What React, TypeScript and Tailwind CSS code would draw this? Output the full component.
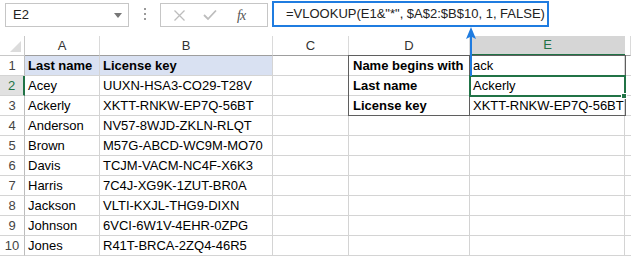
import React from 'react';

const cols = [
  { key: 'A', w: 75 },
  { key: 'B', w: 173 },
  { key: 'C', w: 76 },
  { key: 'D', w: 121 },
  { key: 'E', w: 155 },
  { key: 'F', w: 6 },
];

const people: [string, string][] = [
  ['Acey', 'UUXN-HSA3-CO29-T28V'],
  ['Ackerly', 'XKTT-RNKW-EP7Q-56BT'],
  ['Anderson', 'NV57-8WJD-ZKLN-RLQT'],
  ['Brown', 'M57G-ABCD-WC9M-MO70'],
  ['Davis', 'TCJM-VACM-NC4F-X6K3'],
  ['Harris', '7C4J-XG9K-1ZUT-BR0A'],
  ['Jackson', 'VLTI-KXJL-THG9-DIXN'],
  ['Johnson', '6VCI-6W1V-4EHR-0ZPG'],
  ['Jones', 'R41T-BRCA-2ZQ4-46R5'],
];

const lookup: Record<number, [string, string]> = {
  1: ['Name begins with', 'ack'],
  2: ['Last name', 'Ackerly'],
  3: ['License key', 'XKTT-RNKW-EP7Q-56BT'],
};

const Toolbar: React.FC = () => (
  <div className="flex items-start h-[36px] pt-[1px]">
    <div className="ml-[5px] mt-[2px] w-[124px] h-[24px] border border-[#c6c6c6] bg-white flex items-center justify-between pl-[7px] pr-[6px] text-[13px] text-[#222]">
      <span>E2</span>
      <span className="w-0 h-0 border-l-[4px] border-r-[4px] border-t-[5px] border-l-transparent border-r-transparent border-t-[#777]" />
    </div>
    <div className="w-[31px] h-[26px] flex flex-col items-center justify-center gap-[3px]">
      <span className="w-[2px] h-[2px] bg-[#9a9a9a]" />
      <span className="w-[2px] h-[2px] bg-[#9a9a9a]" />
      <span className="w-[2px] h-[2px] bg-[#9a9a9a]" />
    </div>
    <div className="mt-[2px] w-[108px] h-[24px] border border-[#c6c6c6] bg-white flex items-center pl-[12px] pr-[10px]">
      <svg width="13" height="13" viewBox="0 0 13 13" className="mr-[17px]">
        <path d="M1.5 1.5 L11.5 11.5 M11.5 1.5 L1.5 11.5" stroke="#bdbdbd" strokeWidth="1.3" />
      </svg>
      <svg width="14" height="12" viewBox="0 0 14 12" className="mr-[20px]">
        <path d="M1 6 L5 10 L13 1.5" stroke="#bdbdbd" strokeWidth="1.8" fill="none" />
      </svg>
      <span className="italic text-[14px] text-[#555] tracking-[-1px]" style={{ fontFamily: '"Liberation Serif", serif' }}>
        fx
      </span>
    </div>
    <div className="ml-[4px] w-[277px] h-[26px] border-2 border-[#1f7ce0] bg-white flex items-center pl-[12px] text-[13px] text-[#222]">
      =VLOOKUP(E1&amp;"*", $A$2:$B$10, 1, FALSE)
    </div>
  </div>
);

const HeaderRow: React.FC = () => (
  <div className="flex h-[20px]">
    <div className="w-[25px] shrink-0 border-r border-b border-[#c8c8c8] bg-white relative overflow-hidden">
      <svg className="absolute right-[3px] bottom-[3px]" width="11" height="11" viewBox="0 0 11 11">
        <path d="M11 0 L11 11 L0 11 Z" fill="#dcdcdc" />
      </svg>
    </div>
    {cols.map((c) =>
      c.key === 'E' ? (
        <div
          key={c.key}
          style={{ width: c.w }}
          className="shrink-0 bg-[#d6d6d6] border-b-2 border-[#217346] flex items-center justify-center text-[13px] text-[#217346]"
        >
          E
        </div>
      ) : (
        <div
          key={c.key}
          style={{ width: c.w }}
          className="shrink-0 bg-white border-r border-b border-[#dadada] border-b-[#9e9e9e] flex items-center justify-center text-[13px] text-[#333]"
        >
          {c.key === 'F' ? '' : c.key}
        </div>
      ),
    )}
  </div>
);

const Row: React.FC<{ n: number }> = ({ n }) => {
  const data = n === 1 ? ['Last name', 'License key'] : people[n - 2];
  const look = lookup[n];
  const bold = n === 1;
  const active = n === 2;
  return (
    <div className="flex h-[20px]">
      <div
        className={`w-[25px] shrink-0 border-b border-[#d4d4d4] flex items-center justify-center text-[13px] ${
          active ? 'bg-[#e1e1e1] border-r-2 border-r-[#217346] text-[#217346]' : 'bg-white border-r border-r-[#bdbdbd] text-[#444]'
        }`}
      >
        {n}
      </div>
      <div className={`w-[75px] shrink-0 border-r border-b border-[#d4d4d4] pl-[3px] pt-[1px] text-[13px] text-black leading-[18px] whitespace-nowrap ${bold ? 'font-bold bg-[#d9e1f2]' : 'bg-white'}`}>
        {data[0]}
      </div>
      <div className={`w-[173px] shrink-0 border-r border-b border-[#d4d4d4] pl-[3px] pt-[1px] text-[13px] text-black leading-[18px] whitespace-nowrap ${bold ? 'font-bold bg-[#d9e1f2]' : 'bg-white'}`}>
        {data[1]}
      </div>
      <div className="w-[76px] shrink-0 border-r border-b border-[#d4d4d4] bg-white" />
      <div className="w-[121px] shrink-0 border-r border-b border-[#d4d4d4] bg-white pl-[4px] pt-[1px] text-[13px] font-bold text-black leading-[18px] whitespace-nowrap">
        {look ? look[0] : ''}
      </div>
      <div className="w-[155px] shrink-0 border-r border-b border-[#d4d4d4] bg-white pl-[3px] pt-[1px] text-[13px] text-black leading-[18px] whitespace-nowrap">
        {look ? look[1] : ''}
      </div>
      <div className="w-[6px] shrink-0 border-b border-[#d4d4d4] bg-white" />
    </div>
  );
};

export default function App() {
  return (
    <div className="w-[631px] h-[257px] bg-white overflow-hidden relative" style={{ fontFamily: '"Liberation Sans", Arial, sans-serif' }}>
      <Toolbar />
      <HeaderRow />
      {Array.from({ length: 10 }, (_, i) => (
        <Row key={i} n={i + 1} />
      ))}

      {/* lookup table outline D1:E3 */}
      <div className="absolute left-[348px] top-[55px] w-[278px] h-[61px] border border-[#5f5f5f] pointer-events-none" />
      <div className="absolute left-[469px] top-[56px] w-px h-[60px] bg-[#5f5f5f] pointer-events-none" />

      {/* active cell E2 */}
      <div className="absolute left-[469px] top-[75px] w-[157px] h-[22px] border-2 border-[#217346] pointer-events-none" />
      <div className="absolute left-[621px] top-[93px] w-[6px] h-[6px] bg-[#217346] border border-white pointer-events-none" />

      {/* arrow from formula bar to E1 */}
      <svg className="absolute left-[463px] top-[26px] pointer-events-none" width="16" height="52" viewBox="0 0 16 52">
        <path d="M8 8 L8 50" stroke="#1f7ce0" strokeWidth="2" />
        <path d="M8 1 L13 13 L8 10.5 L3 13 Z" fill="#1f7ce0" />
      </svg>
    </div>
  );
}
